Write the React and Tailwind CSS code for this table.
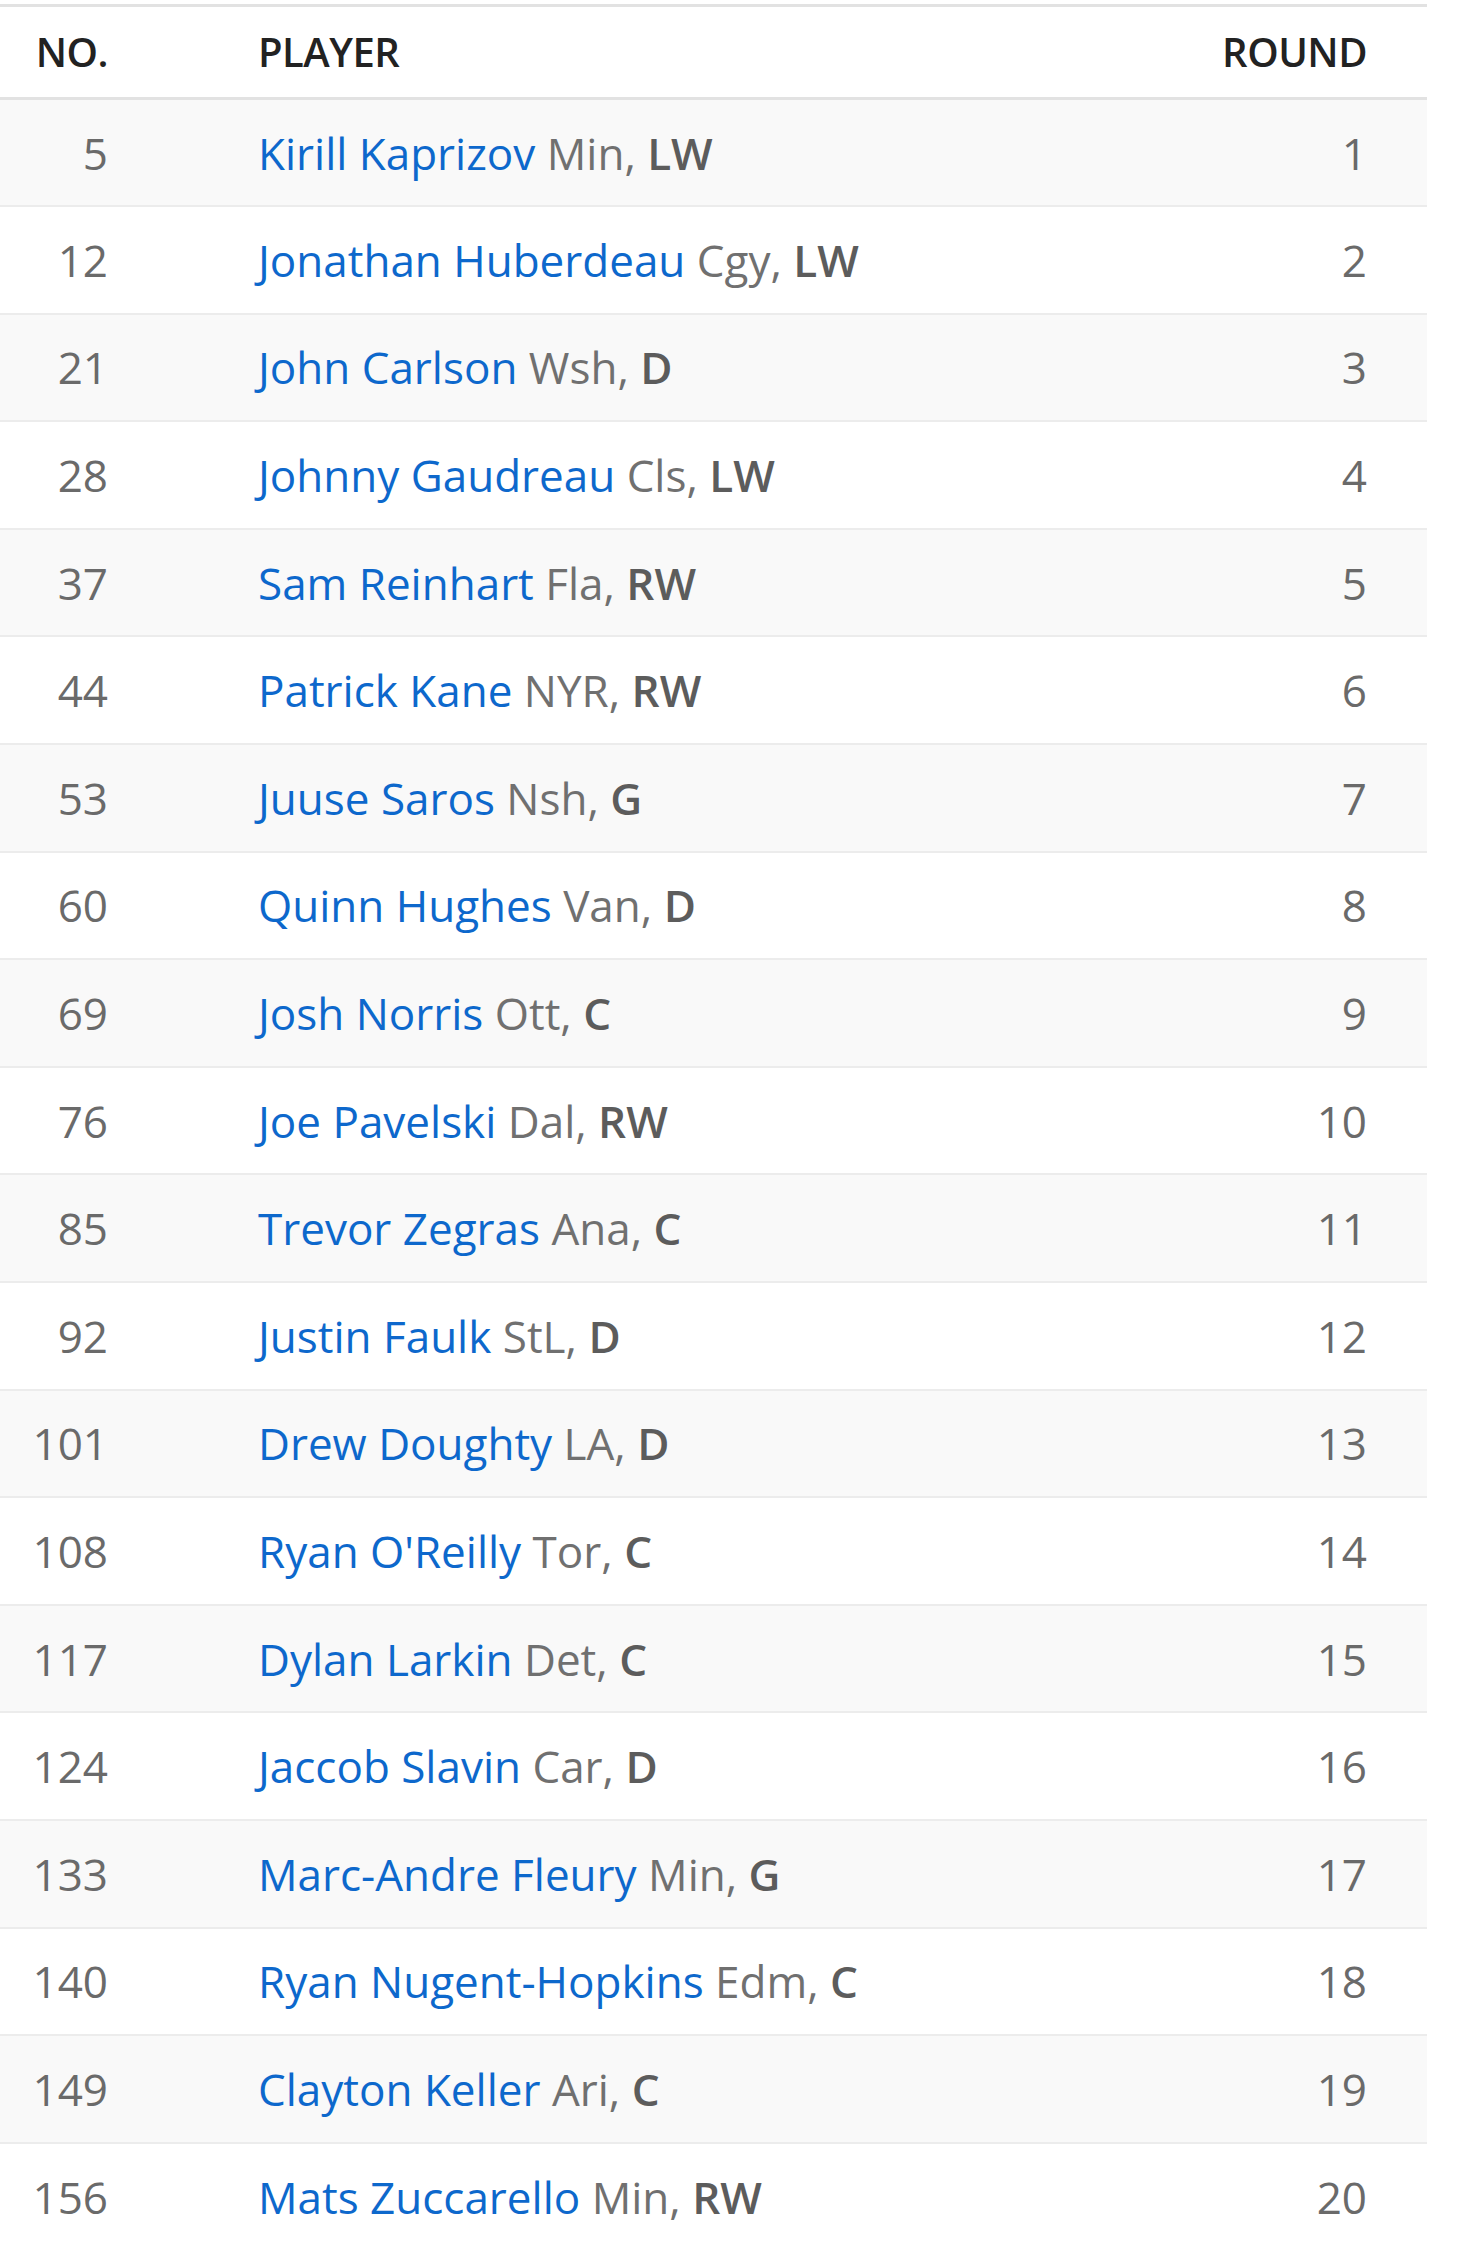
const picks = [
  [5, 'Kirill Kaprizov', 'Min', 'LW', 1],
  [12, 'Jonathan Huberdeau', 'Cgy', 'LW', 2],
  [21, 'John Carlson', 'Wsh', 'D', 3],
  [28, 'Johnny Gaudreau', 'Cls', 'LW', 4],
  [37, 'Sam Reinhart', 'Fla', 'RW', 5],
  [44, 'Patrick Kane', 'NYR', 'RW', 6],
  [53, 'Juuse Saros', 'Nsh', 'G', 7],
  [60, 'Quinn Hughes', 'Van', 'D', 8],
  [69, 'Josh Norris', 'Ott', 'C', 9],
  [76, 'Joe Pavelski', 'Dal', 'RW', 10],
  [85, 'Trevor Zegras', 'Ana', 'C', 11],
  [92, 'Justin Faulk', 'StL', 'D', 12],
  [101, 'Drew Doughty', 'LA', 'D', 13],
  [108, "Ryan O'Reilly", 'Tor', 'C', 14],
  [117, 'Dylan Larkin', 'Det', 'C', 15],
  [124, 'Jaccob Slavin', 'Car', 'D', 16],
  [133, 'Marc-Andre Fleury', 'Min', 'G', 17],
  [140, 'Ryan Nugent-Hopkins', 'Edm', 'C', 18],
  [149, 'Clayton Keller', 'Ari', 'C', 19],
  [156, 'Mats Zuccarello', 'Min', 'RW', 20],
]

export default function App() {
  return (
    <div className="bg-white pt-[4px] font-['Open_Sans',sans-serif]">
      <table className="w-[1427px] table-fixed border-collapse">
        <colgroup>
          <col className="w-[108px]" />
          <col />
          <col className="w-[300px]" />
        </colgroup>
        <thead>
          <tr className="h-[93px] border-t-[3px] border-b-[3px] border-[#e2e2e2] text-[40px] font-semibold text-[#222] tracking-[-0.5px]">
            <th className="text-right font-semibold">NO.</th>
            <th className="pl-[150px] text-left font-semibold">PLAYER</th>
            <th className="pr-[60px] text-right font-semibold">ROUND</th>
          </tr>
        </thead>
        <tbody className="text-[44px]">
          {picks.map(([no, name, team, pos, round], i) => (
            <tr
              key={no}
              className={`h-[107.6px] border-b-[2px] border-[#ececec] ${i % 2 === 0 ? 'bg-[#f9f9f9]' : 'bg-white'}`}
            >
              <td className="text-right text-[#6a6a6a]">{no}</td>
              <td className="pl-[150px] whitespace-nowrap">
                <a className="text-[#0d68cc]">{name}</a>{' '}
                <span className="text-[#707070]">{team}, </span>
                <span className="font-semibold text-[#5c5c5c]">{pos}</span>
              </td>
              <td className="pr-[60px] text-right text-[#6a6a6a]">{round}</td>
            </tr>
          ))}
        </tbody>
      </table>
    </div>
  )
}
